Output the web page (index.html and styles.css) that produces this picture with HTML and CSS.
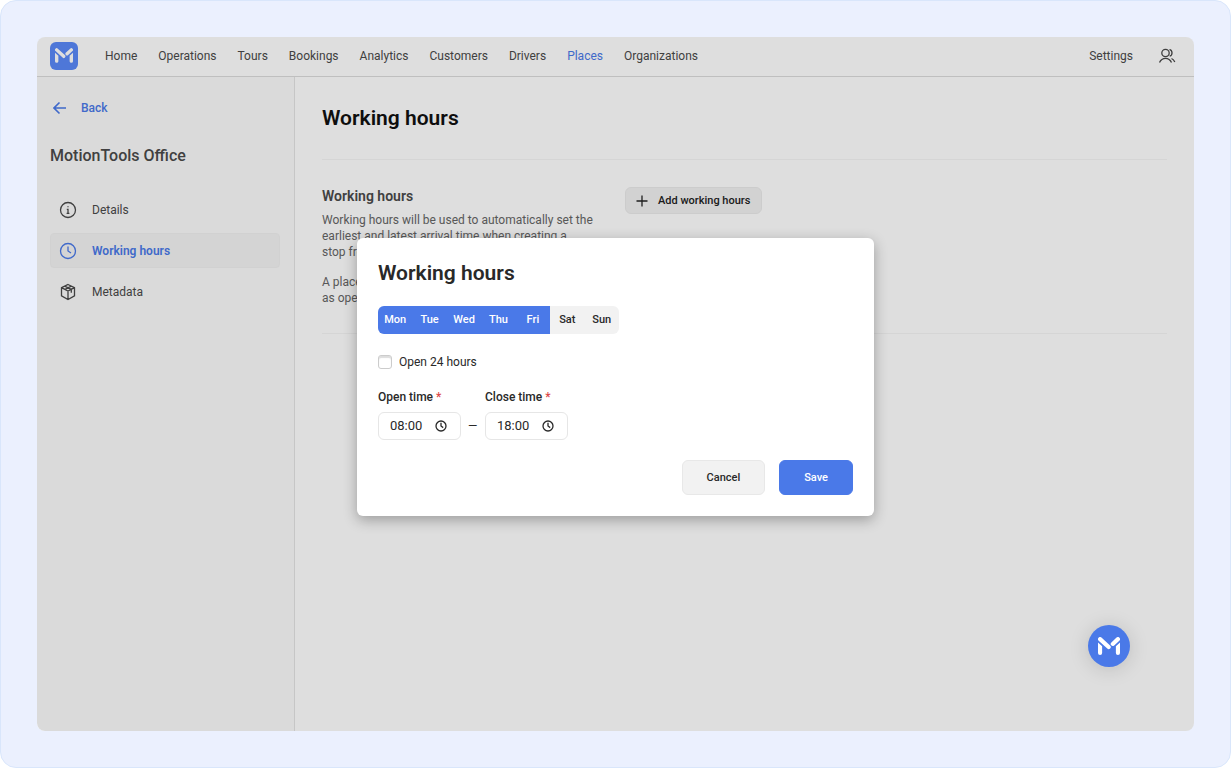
FILE: index.html
```html
<!DOCTYPE html>
<html lang="en">
<head>
    <meta charset="UTF-8">
    <meta name="viewport" content="width=device-width, initial-scale=1.0">
    <title>Working hours</title>
    <link rel="stylesheet" href="styles.css">
</head>
<body>
    <svg class="defs" width="0" height="0" aria-hidden="true">
        <symbol id="logo-m" viewBox="0 0 64 52">
            <path d="M6 6 31 29" fill="none" stroke="currentColor" stroke-width="12" stroke-linecap="round"/>
            <path d="M58 6 43 20" fill="none" stroke="currentColor" stroke-width="12" stroke-linecap="round"/>
            <path d="M0 16 12 27V46a6 6 0 0 1-12 0ZM64 16 52 27V46a6 6 0 0 0 12 0Z" fill="currentColor"/>
        </symbol>
    </svg>

    <div class="page">
        <div class="app">
            <header class="topbar">
                <a href="#" class="logo" aria-label="MotionTools"><svg><use href="#logo-m"/></svg></a>
                <nav class="nav">
                    <a href="#">Home</a>
                    <a href="#">Operations</a>
                    <a href="#">Tours</a>
                    <a href="#">Bookings</a>
                    <a href="#">Analytics</a>
                    <a href="#">Customers</a>
                    <a href="#">Drivers</a>
                    <a href="#" class="active">Places</a>
                    <a href="#">Organizations</a>
                </nav>
                <a href="#" class="settings">Settings</a>
                <button class="users" aria-label="Users">
                    <svg width="18" height="18" viewBox="0 0 18 18"><circle cx="7.5" cy="6" r="3.7"/><path d="M1.500 15.500c1.300-3 3.400-4.200 6-4.200s4.700 1.200 6 4.200M11.500 2.600c3 .3 3.600 5.500.2 6.600M13.500 11.500c1.500.6 2.600 1.800 3.300 3.500"/></svg>
                </button>
            </header>

            <div class="body">
                <aside class="sidebar">
                    <a href="#" class="back">
                        <svg width="14" height="14" viewBox="0 0 14 14"><path d="M13 7H1.500M6.500 1.500 1 7l5.500 5.500"/></svg>
                        Back
                    </a>
                    <h2 class="place">MotionTools Office</h2>
                    <nav class="menu">
                        <a href="#">
                            <svg width="18" height="18" viewBox="0 0 18 18"><circle cx="9" cy="9" r="7.500"/><path d="M7.800 8.300H9v4M7.600 12.300h2.800M9 5.300v1"/></svg>
                            Details
                        </a>
                        <a href="#" class="active">
                            <svg width="18" height="18" viewBox="0 0 18 18"><circle cx="9" cy="9" r="7.500"/><path d="M9 4.500V9l3 2"/></svg>
                            Working hours
                        </a>
                        <a href="#">
                            <svg width="18" height="18" viewBox="0 0 18 18"><path d="M9 1.500 15.500 4.700v8.100L9 16.500l-6.500-3.700V4.700ZM2.500 4.700 9 8.100l6.500-3.400M9 8.100v8.400M5.700 3.200l6.600 3.300v3.300M12.300 3.200 5.700 6.500"/></svg>
                            Metadata
                        </a>
                    </nav>
                </aside>

                <main class="content">
                    <h1>Working hours</h1>
                    <section class="section">
                        <div class="info">
                            <h3>Working hours</h3>
                            <p>Working hours will be used to automatically set the<br>earliest and latest arrival time when creating a<br>stop from this place.</p>
                            <p>A place without working hours is considered<br>as open 24 hours.</p>
                        </div>
                        <button class="add">
                            <svg width="12" height="12" viewBox="0 0 12 12"><path d="M6 .5v11M.5 6h11"/></svg>
                            Add working hours
                        </button>
                    </section>
                </main>
            </div>

            <div class="overlay">
                <form class="modal" role="dialog" aria-labelledby="modalTitle">
                    <h2 id="modalTitle">Working hours</h2>
                    <div class="days">
                        <button type="button" class="on">Mon</button>
                        <button type="button" class="on">Tue</button>
                        <button type="button" class="on">Wed</button>
                        <button type="button" class="on">Thu</button>
                        <button type="button" class="on">Fri</button>
                        <button type="button">Sat</button>
                        <button type="button">Sun</button>
                    </div>
                    <label class="check"><input type="checkbox" id="open24"> Open 24 hours</label>
                    <div class="times">
                        <div class="field">
                            <label for="openTime">Open time <span>*</span></label>
                            <div class="time">
                                <input type="text" id="openTime" value="08:00">
                                <svg width="12" height="12" viewBox="0 0 12 12"><circle cx="6" cy="6" r="5"/><path d="M6 2.800V6l2.200 1.600"/></svg>
                            </div>
                        </div>
                        <span class="dash">—</span>
                        <div class="field">
                            <label for="closeTime">Close time <span>*</span></label>
                            <div class="time">
                                <input type="text" id="closeTime" value="18:00">
                                <svg width="12" height="12" viewBox="0 0 12 12"><circle cx="6" cy="6" r="5"/><path d="M6 2.800V6l2.200 1.600"/></svg>
                            </div>
                        </div>
                    </div>
                    <div class="actions">
                        <button type="button" class="cancel">Cancel</button>
                        <button type="button" class="save">Save</button>
                    </div>
                </form>
            </div>

            <button class="chat" aria-label="Open help"><svg><use href="#logo-m"/></svg></button>
        </div>
    </div>
</body>
</html>
```
FILE: styles.css
```css
* {
    box-sizing: border-box;
}

body {
    margin: 0;
    background: #fff;
    color: #4a4a4a;
    font-family: Roboto, "Liberation Sans", sans-serif;
    font-size: 12px;
}

h1, h2, h3, p {
    margin: 0;
}

a {
    color: inherit;
    text-decoration: none;
}

button, input {
    font: inherit;
    color: inherit;
}

button {
    padding: 0;
    border: none;
    background: none;
    cursor: pointer;
}

svg {
    flex: none;
    fill: none;
    stroke: currentColor;
    stroke-width: 1.3;
}

.defs {
    position: absolute;
}

.page {
    display: flex;
    min-height: 100vh;
    padding: 36px;
    border: 1px solid #d9e6fb;
    border-radius: 16px;
    background: #ebf0fe;
}

.app {
    position: relative;
    display: flex;
    flex-direction: column;
    flex: 1;
    overflow: hidden;
    border-radius: 8px;
    background: #fff;
}

/* top bar */
.topbar {
    display: flex;
    align-items: center;
    height: 40px;
    padding: 0 18px 2px 13px;
    border-bottom: 1px solid #dcdcdc;
}

.logo {
    display: flex;
    align-items: center;
    justify-content: center;
    width: 28px;
    height: 28px;
    margin-right: 27px;
    border-radius: 6px;
    background: #5a89f8;
    color: #fff;
}

.logo svg {
    width: 18px;
    height: 15px;
    stroke: none;
}

.nav {
    display: flex;
    flex: 1;
    gap: 21px;
}

.nav .active {
    color: #4a79e8;
}

.users {
    display: flex;
    margin-left: 25px;
}

.body {
    display: flex;
    flex: 1;
}

/* sidebar */
.sidebar {
    width: 258px;
    padding: 21px 14px 21px 13px;
    border-right: 1px solid #e4e4e4;
    background: #fbfbfb;
}

.back {
    display: flex;
    align-items: center;
    gap: 14px;
    height: 20px;
    padding-left: 3px;
    color: #4a79e8;
    font-weight: 500;
}

.back svg {
    stroke-width: 1.6;
}

.place {
    margin: 26px 0 24px;
    font-size: 16px;
    line-height: 24px;
    font-weight: 500;
}

.menu {
    display: flex;
    flex-direction: column;
    gap: 6px;
}

.menu a {
    display: flex;
    align-items: center;
    gap: 15px;
    height: 35px;
    padding-left: 8px;
    border: 1px solid transparent;
    border-radius: 4px;
}

.menu .active {
    border-color: #f1f1f1;
    background: #f4f4f4;
    color: #4a79e8;
    font-weight: 600;
}

/* content */
.content {
    flex: 1;
    padding: 27px;
}

.content h1 {
    padding-bottom: 26px;
    border-bottom: 1px solid #f5f5f5;
    color: #111;
    font-size: 21px;
    line-height: 29px;
    font-weight: 600;
}

.section {
    display: flex;
    align-items: flex-start;
    gap: 25px;
    padding: 27px 0;
    border-bottom: 1px solid #f5f5f5;
}

.info {
    width: 278px;
    color: #666;
}

.info h3 {
    margin-bottom: 7px;
    color: #4a4a4a;
    font-size: 14px;
    line-height: 18px;
    font-weight: 600;
}

.info p {
    line-height: 16px;
    white-space: nowrap;
}

.info p + p {
    margin-top: 14px;
}

.add {
    display: flex;
    align-items: center;
    gap: 10px;
    height: 27px;
    padding: 0 11px 0 10px;
    border: 1px solid #ebebeb;
    border-radius: 6px;
    background: #f2f2f2;
    color: #222;
    font-size: 11px;
    font-weight: 500;
}

/* modal */
.overlay {
    position: absolute;
    inset: 0;
    display: flex;
    align-items: center;
    justify-content: center;
    padding-bottom: 15px;
    background: rgba(0, 0, 0, 0.13);
}

.modal {
    width: 517px;
    padding: 21px;
    border-radius: 6px;
    background: #fff;
    color: #292929;
    box-shadow: 0 4px 14px rgba(0, 0, 0, 0.3);
}

.modal h2 {
    margin-bottom: 19px;
    font-size: 21px;
    line-height: 28px;
    font-weight: 600;
}

.days {
    display: flex;
    width: 241px;
    overflow: hidden;
    border-radius: 6px;
    background: #f2f2f2;
}

.days button {
    flex: 1;
    height: 28px;
    font-size: 11px;
    font-weight: 500;
}

.days .on {
    background: #4a79e8;
    color: #fff;
}

.check {
    display: flex;
    align-items: center;
    gap: 7px;
    margin: 20px 0 18px;
    line-height: 16px;
}

.check input {
    appearance: none;
    width: 14px;
    height: 14px;
    margin: 0;
    border: 1px solid #ccc;
    border-radius: 3px;
    box-shadow: inset 0 2px 1px #ddd;
}

.check input:checked {
    background: #4a79e8;
}

.times {
    display: flex;
    align-items: flex-end;
    gap: 7px;
}

.field label {
    display: block;
    margin-bottom: 6px;
    line-height: 18px;
    font-weight: 500;
}

.field label span {
    color: #dc4848;
}

.time {
    display: flex;
    align-items: center;
    width: 83px;
    height: 28px;
    padding: 0 13px 0 11px;
    border: 1px solid #e6e6e6;
    border-radius: 6px;
}

.time input {
    flex: 1;
    min-width: 0;
    padding: 0;
    border: none;
    outline: none;
    font-size: 13px;
}

.dash {
    width: 10px;
    font-size: 12px;
    line-height: 28px;
}

.actions {
    display: flex;
    justify-content: flex-end;
    gap: 14px;
    margin-top: 20px;
}

.actions button {
    height: 35px;
    padding: 0 24px;
    border: 1px solid #e8e8e8;
    border-radius: 6px;
    background: #f2f2f2;
    font-size: 11px;
    font-weight: 500;
}

.actions .save {
    border-color: #4a79e8;
    background: #4a79e8;
    color: #fff;
}

/* help button */
.chat {
    position: absolute;
    right: 64px;
    bottom: 64px;
    display: flex;
    align-items: center;
    justify-content: center;
    width: 42px;
    height: 42px;
    border-radius: 50%;
    background: #4a79e8;
    color: #fff;
    box-shadow: 0 2px 20px rgba(0, 0, 0, 0.15);
}

.chat svg {
    width: 22px;
    height: 18px;
    stroke: none;
}
```
